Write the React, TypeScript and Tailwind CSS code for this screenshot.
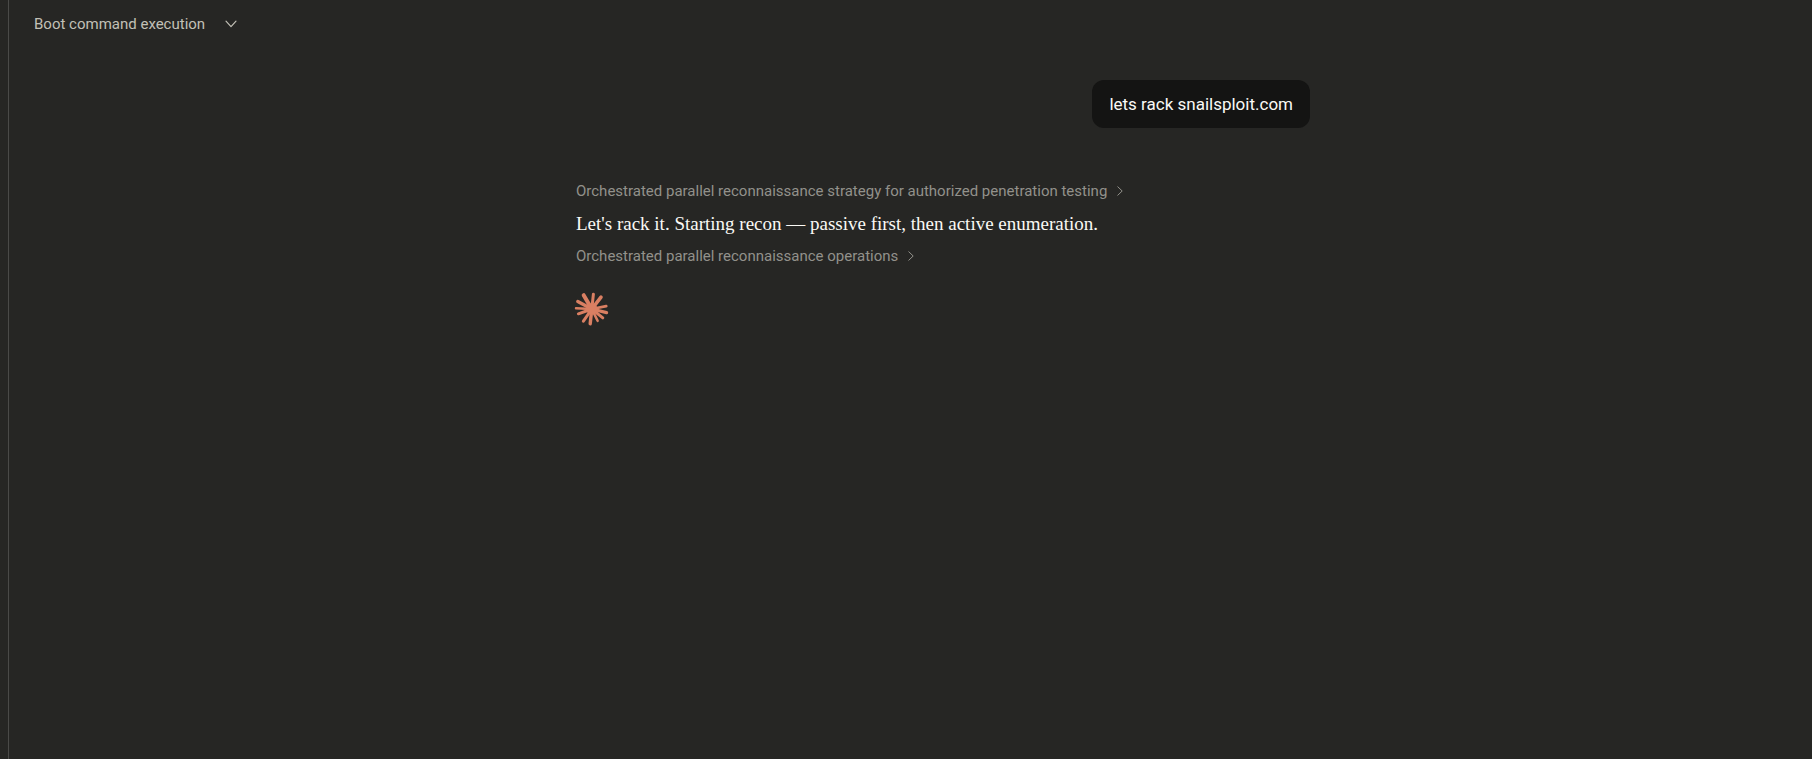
import React from "react";

const RAYS: [number, number, number][] = [
  [8.5, 3, 4],
  [18.2, 2, 3],
  [25.8, 5, 3.6],
  [31, 14, 2.8],
  [31.4, 20.4, 3.2],
  [27.6, 25.6, 3],
  [22.4, 28.6, 2.6],
  [15, 31.6, 3.4],
  [8.2, 29, 3],
  [3.2, 21.6, 3],
  [0.8, 16, 2.4],
  [2.6, 9.4, 3.4],
];

function Spark() {
  return (
    <svg viewBox="0.8 -0.2 33 33" className="size-[33px] overflow-visible" aria-hidden="true">
      <g stroke="#d97f62" strokeLinecap="round">
        {RAYS.map(([x, y, w]) => (
          <line key={`${x}-${y}`} x1="16.6" y1="16.8" x2={x} y2={y} strokeWidth={w} />
        ))}
      </g>
      <circle cx="16.6" cy="16.8" r="5.6" fill="#d97f62" />
    </svg>
  );
}

function Chevron({ direction }: { direction: "right" | "down" }) {
  return direction === "right" ? (
    <svg viewBox="0 0 6 10" className="h-[10px] w-[6px]" fill="none" stroke="currentColor" aria-hidden="true">
      <path d="M0.8 0.8 L5.2 5 L0.8 9.2" strokeLinecap="round" strokeLinejoin="round" />
    </svg>
  ) : (
    <svg viewBox="0 0 12 8" className="h-2 w-3" fill="none" stroke="currentColor" strokeWidth="1.2" aria-hidden="true">
      <path d="M1 1.2 L6 6.6 L11 1.2" strokeLinecap="round" strokeLinejoin="round" />
    </svg>
  );
}

function Step({ children }: { children: React.ReactNode }) {
  return (
    <button type="button" className="flex items-center gap-2.5 text-left text-[15px] leading-6 text-[#92918b]">
      <span>{children}</span>
      <Chevron direction="right" />
    </button>
  );
}

export default function App() {
  return (
    <div className="flex min-h-screen bg-[#262624] font-['Roboto',sans-serif]">
      <div className="w-[9px] shrink-0 border-r border-[#4a4a48]" />
      <div className="flex min-w-0 flex-1 flex-col">
        <header className="flex h-12 items-center pl-[25px]">
          <button type="button" className="flex items-center gap-5 text-[15px] leading-6 text-[#c2c0b6]">
            <span>Boot command execution</span>
            <Chevron direction="down" />
          </button>
        </header>
        <main className="pt-8 pl-[65px]">
          <div className="mx-auto flex max-w-[734px] flex-col">
            <div className="self-end rounded-xl bg-[#141413] px-[17px] py-3 text-[17px] leading-6 text-[#faf9f5]">
              lets rack snailsploit.com
            </div>
            <div className="mt-[51px] flex flex-col items-start gap-2">
              <Step>Orchestrated parallel reconnaissance strategy for authorized penetration testing</Step>
              <p className="font-['Liberation_Serif',serif] text-[19px] leading-[25px] text-[#faf9f5]">
                Let's rack it. Starting recon — passive first, then active enumeration.
              </p>
              <Step>Orchestrated parallel reconnaissance operations</Step>
            </div>
            <div className="mt-6">
              <Spark />
            </div>
          </div>
        </main>
      </div>
    </div>
  );
}
